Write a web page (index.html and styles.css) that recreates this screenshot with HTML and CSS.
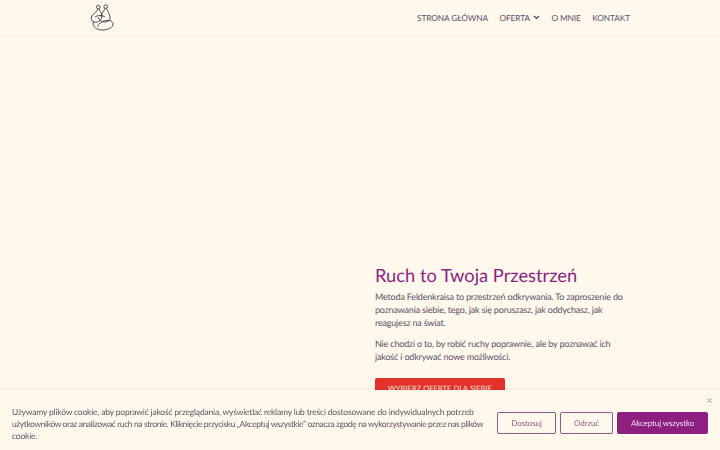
FILE: index.html
```html
<!DOCTYPE html>
<html lang="pl">
<head>
    <meta charset="UTF-8">
    <meta name="viewport" content="width=device-width, initial-scale=1.0">
    <title>Ruch to Twoja Przestrzeń</title>
    <link rel="stylesheet" href="styles.css">
</head>
<body>
    <header class="header">
        <div class="header-inner">
            <svg class="logo" width="24" height="27" viewBox="0 0 24 27" fill="none" stroke="#2b2230" stroke-width="0.800">
                <circle cx="8.300" cy="3" r="1.800"/>
                <circle cx="15.700" cy="2.700" r="1.800"/>
                <path d="M8 5C7 8 4 9 2.500 11C0.500 13.500 1 17 4 18C7 19 11 17 12 13C12.500 10 10 7.500 9 5"/>
                <path d="M15 4.500C13.500 7 11.500 10 11 13"/>
                <path d="M16.500 4.500C18 7 19.500 10 20 13C20.500 16 18 18 15 18C12 18 9 16 8 13"/>
                <path d="M3.500 17.500C2 21 5 26 12 26C18 26 23.500 23.500 23 19.500C22.500 16.500 18 15.500 14 17C10 18.500 7 21 8 23"/>
                <path d="M5 13C8 11 12 11 15 13"/>
            </svg>
            <nav class="nav">
                <a href="#">Strona główna</a>
                <a href="#" class="has-sub">Oferta<svg width="7" height="5" viewBox="0 0 7 5" fill="none" stroke="#4a3f5c" stroke-width="1.200"><path d="M1 1l2.500 2.500L6 1"/></svg></a>
                <a href="#">O mnie</a>
                <a href="#">Kontakt</a>
            </nav>
        </div>
    </header>

    <main class="hero">
        <div class="hero-col">
            <h1>Ruch to Twoja Przestrzeń</h1>
            <p>Metoda Feldenkraisa to przestrzeń odkrywania. To zaproszenie do poznawania siebie, tego, jak się poruszasz, jak oddychasz, jak reagujesz na świat.</p>
            <p>Nie chodzi o to, by robić ruchy poprawnie, ale by poznawać ich jakość i odkrywać nowe możliwości.</p>
            <a href="#" class="cta">Wybierz ofertę dla siebie</a>
        </div>
    </main>

    <div class="cookie">
        <button class="cookie-close" aria-label="Zamknij">
            <svg width="5" height="5" viewBox="0 0 5 5" stroke="#8a8a8a" stroke-width="1"><path d="M0.500 0.500l4 4M4.500 0.500l-4 4"/></svg>
        </button>
        <p class="cookie-text">Używamy plików cookie, aby poprawić jakość przeglądania, wyświetlać reklamy lub treści dostosowane do indywidualnych potrzeb <span class="cookie-line">użytkowników oraz analizować ruch na stronie. Kliknięcie przycisku „Akceptuj wszystkie” oznacza zgodę na wykorzystywanie przez nas plików</span> cookie.</p>
        <div class="cookie-actions">
            <button class="btn btn-outline btn-custom">Dostosuj</button>
            <button class="btn btn-outline btn-reject">Odrzuć</button>
            <button class="btn btn-solid">Akceptuj wszystko</button>
        </div>
    </div>
</body>
</html>
```
FILE: styles.css
```css
html, body {
    height: 100%;
}

body {
    margin: 0;
    overflow: hidden;
    background-color: #fff8ec;
    color: #5b5068;
    font-family: "Lato", "Open Sans", sans-serif;
    text-rendering: geometricPrecision;
}

.header {
    height: 35px;
    border-bottom: 1px solid #f7f1e5;
}

.header-inner {
    width: 540px;
    height: 100%;
    margin: 0 auto;
    display: flex;
    align-items: center;
    justify-content: space-between;
}

.logo {
    margin-top: -1px;
}

.nav {
    display: flex;
    gap: 11.500px;
}

.nav a {
    color: #5a4f6c;
    font-size: 8.300px;
    letter-spacing: -0.1px;
    text-decoration: none;
    text-transform: uppercase;
}

.has-sub {
    display: flex;
    align-items: center;
    gap: 3px;
}

.hero {
    display: flex;
    justify-content: flex-end;
    width: 540px;
    margin: 0 auto;
    padding-top: 226px;
}

.hero-col {
    width: 255px;
}

h1 {
    margin: 0 0 2px;
    color: #8c1f7f;
    font-size: 18.300px;
    font-weight: 400;
    line-height: 26px;
}

.hero-col p {
    margin: 0 0 8px;
    font-size: 9px;
    letter-spacing: -0.18px;
    line-height: 13px;
}

.cta {
    display: block;
    width: 130px;
    height: 30px;
    margin-top: 15px;
    background-color: #e3312b;
    border-radius: 2px;
    color: #fbe9dc;
    font-size: 7.500px;
    letter-spacing: 0.05px;
    line-height: 22px;
    text-align: center;
    text-decoration: none;
    text-transform: uppercase;
}

.cookie {
    position: fixed;
    left: 0;
    right: 0;
    bottom: 0;
    height: 60px;
    box-sizing: border-box;
    padding: 0 12px 8px;
    display: flex;
    align-items: flex-end;
    justify-content: space-between;
    background-color: #fff8ec;
    box-shadow: 0 -1px 3px rgba(0, 0, 0, 0.06);
}

.cookie-close {
    position: absolute;
    top: 6px;
    right: 8px;
    padding: 0;
    border: none;
    background: none;
    line-height: 5px;
}

.cookie-text {
    width: 476px;
    margin: 0;
    font-size: 8.500px;
    letter-spacing: -0.18px;
    line-height: 12px;
    color: #5f5565;
}

.cookie-line {
    display: block;
    letter-spacing: -0.4px;
    white-space: nowrap;
}

.cookie-actions {
    display: flex;
    gap: 4px;
    margin-bottom: 8px;
}

.btn {
    height: 22px;
    box-sizing: border-box;
    border-radius: 2px;
    font-family: inherit;
    font-size: 8px;
    letter-spacing: -0.1px;
    padding: 0;
    text-rendering: geometricPrecision;
}

.btn-outline {
    border: 1.500px solid #8f5a8a;
    background: none;
    color: #8f5a8a;
}

.btn-custom {
    width: 59px;
}

.btn-reject {
    width: 53px;
}

.btn-solid {
    width: 91px;
    border: none;
    background-color: #8c1f7f;
    color: #f3dff0;
}
```
